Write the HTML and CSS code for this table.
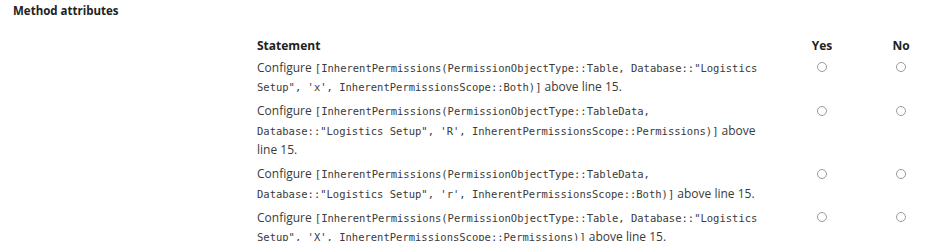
FILE: index.html
```html
<!DOCTYPE html>
<html lang="en">
<head>
    <meta charset="UTF-8">
    <title>Method attributes</title>
    <link rel="stylesheet" href="styles.css">
</head>
<body>
    <div class="page">
        <h2 class="section-title">Method attributes</h2>

        <div class="answer-table">
            <div class="row head">
                <div class="statement">Statement</div>
                <div class="choice">Yes</div>
                <div class="choice">No</div>
            </div>

            <div class="row">
                <div class="statement">Configure <code>[InherentPermissions(PermissionObjectType::Table, Database::"Logistics Setup", 'x', InherentPermissionsScope::Both)]</code> above line 15.</div>
                <div class="choice"><span class="radio"></span></div>
                <div class="choice"><span class="radio"></span></div>
            </div>

            <div class="row">
                <div class="statement">Configure <code>[InherentPermissions(PermissionObjectType::TableData, Database::"Logistics Setup", 'R', InherentPermissionsScope::Permissions)]</code> above line 15.</div>
                <div class="choice"><span class="radio"></span></div>
                <div class="choice"><span class="radio"></span></div>
            </div>

            <div class="row">
                <div class="statement">Configure <code>[InherentPermissions(PermissionObjectType::TableData, Database::"Logistics Setup", 'r', InherentPermissionsScope::Both)]</code> above line 15.</div>
                <div class="choice"><span class="radio"></span></div>
                <div class="choice"><span class="radio"></span></div>
            </div>

            <div class="row">
                <div class="statement">Configure <code>[InherentPermissions(PermissionObjectType::Table, Database::"Logistics Setup", 'X', InherentPermissionsScope::Permissions)]</code> above line 15.</div>
                <div class="choice"><span class="radio"></span></div>
                <div class="choice"><span class="radio"></span></div>
            </div>
        </div>
    </div>
</body>
</html>
```

FILE: styles.css
```css
body {
    margin: 0;
    background-color: #fff;
    font-family: "Open Sans", Arial, sans-serif;
    font-size: 12px;
    color: #3a3a3a;
}
.page {
    padding: 1px 0 0 13px;
}
.section-title {
    margin: 0;
    font-size: 11.5px;
    font-weight: bold;
    line-height: 19px;
    color: #222;
}
.answer-table {
    margin: 14px 0 0 244px;
}
.row {
    display: grid;
    grid-template-columns: 512px 106px 52px;
    padding: 2px 0 2.5px;
    line-height: 19.5px;
}
.row.head {
    font-weight: bold;
    color: #222;
    padding-bottom: 0;
}
.choice {
    display: flex;
    justify-content: center;
    height: 19.5px;
    align-items: center;
}
code {
    font-family: "DejaVu Sans Mono", "Liberation Mono", monospace;
    font-size: 10.5px;
    line-height: 1;
    color: #3a3a3a;
}
.radio {
    width: 8px;
    height: 8px;
    border: 1.5px solid #9a9a9a;
    border-radius: 50%;
    display: inline-block;
}
```
